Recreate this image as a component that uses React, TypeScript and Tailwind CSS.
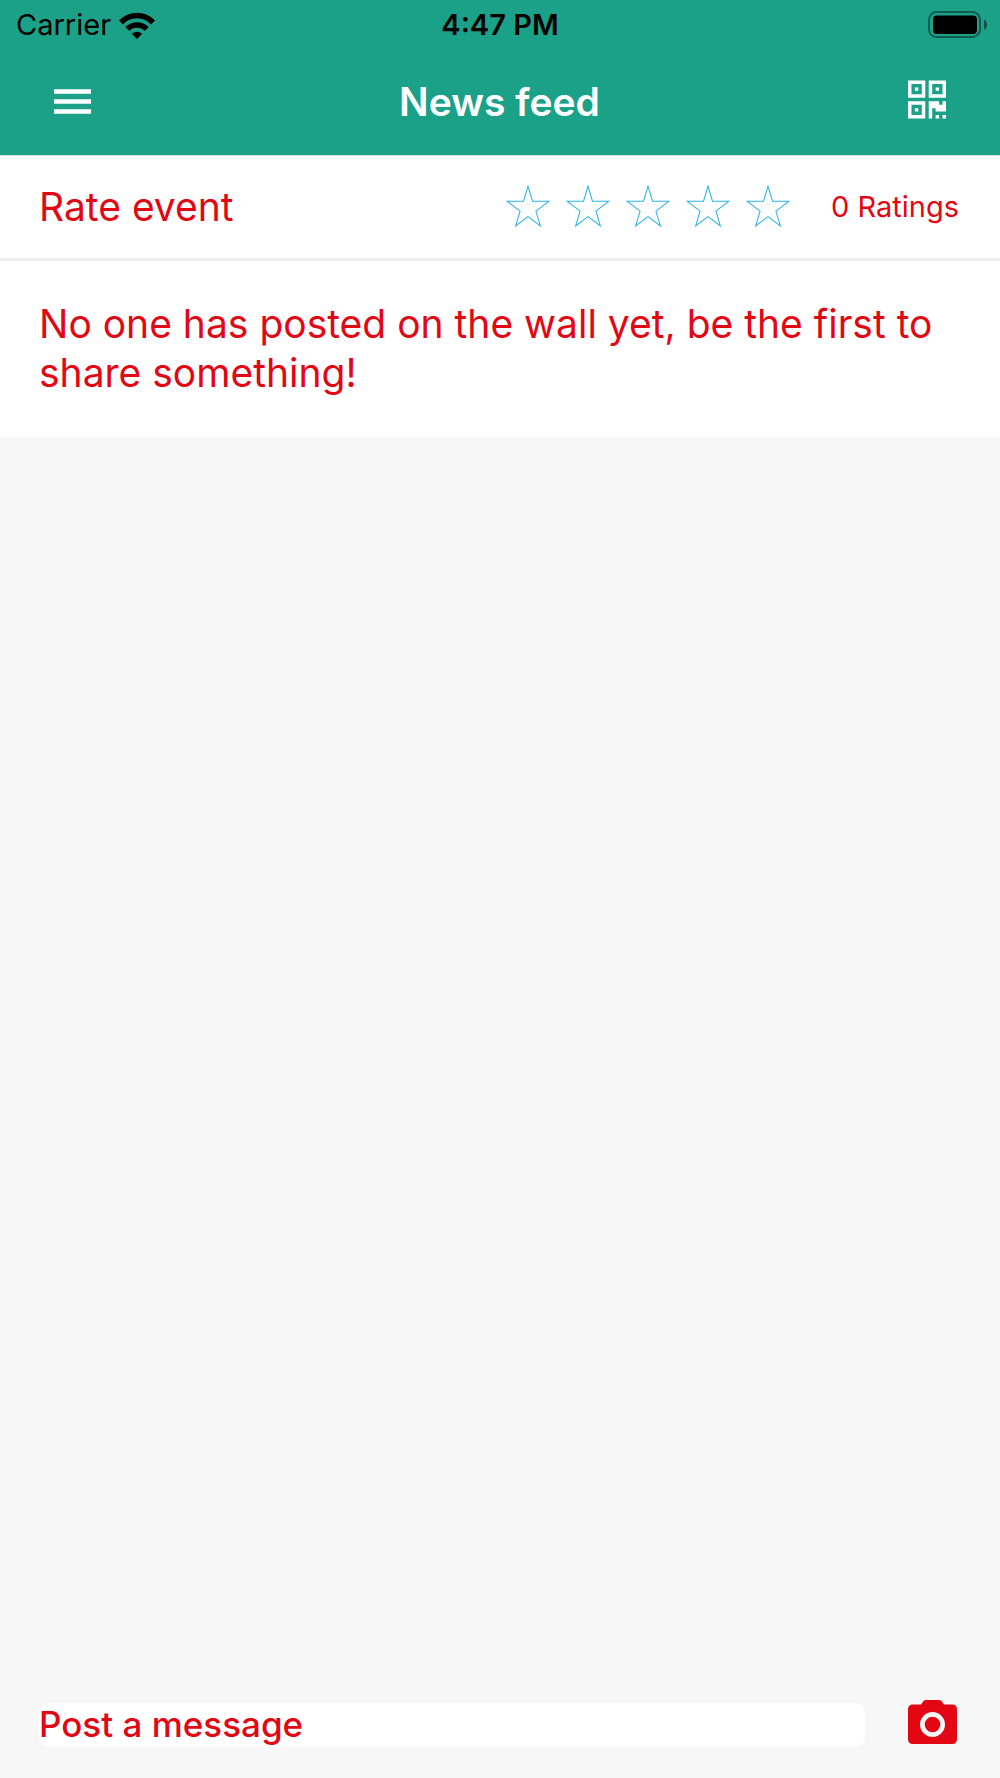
import { useState } from "react";

const QR_MODULES = [
  "M0 0h5v5H0zM1 1v3h3V1zM2 2h1v1H2z",
  "M6 0h5v5H6zM7 1v3h3V1zM8 2h1v1H8z",
  "M0 6h5v5H0zM1 7v3h3V7zM2 8h1v1H2z",
  "M6 6h3v1h1V6h1v3H8V8H7v3H6zM8 10h1v1H8zM10 10h1v1h-1z",
];

function WifiIcon() {
  return (
    <svg viewBox="0 0 36 27" className="h-[27px] w-9" fill="none" stroke="currentColor" aria-hidden="true">
      <path d="M2 10.500a22 22 0 0 1 32 0" strokeWidth="5.500" />
      <path d="M8.300 17a13.500 13.500 0 0 1 19.400 0" strokeWidth="5.500" />
      <path d="M12.800 21.800a8.500 8.500 0 0 1 10.400 0L18 27z" fill="currentColor" stroke="none" />
    </svg>
  );
}

function BatteryIcon() {
  return (
    <svg viewBox="0 0 60 28" className="h-7 w-[60px]" aria-hidden="true">
      <rect x="1" y="1" width="51" height="25" rx="7.5" fill="none" stroke="black" strokeOpacity="0.42" strokeWidth="2" />
      <rect x="5" y="4.5" width="44" height="18.5" rx="4" />
      <path d="M56 8.5c4 2 4 8.500 0 10.500z" fillOpacity="0.5" />
    </svg>
  );
}

function StatusBar() {
  return (
    <div className="grid h-[50px] grid-cols-3 items-center px-3 text-[29px] leading-8 text-black">
      <div className="flex items-center gap-2 pl-1">
        <span>Carrier</span>
        <WifiIcon />
      </div>
      <span className="text-center font-semibold">4:47 PM</span>
      <div className="flex justify-end">
        <BatteryIcon />
      </div>
    </div>
  );
}

function Header() {
  return (
    <header className="border-b border-[#d5dbd9] bg-[#1ca189]">
      <StatusBar />
      <div className="flex h-[105px] items-start justify-between px-[54px] pt-[27px]">
        <button type="button" aria-label="Menu" className="flex h-[49px] items-center">
          <svg viewBox="0 0 37 25" className="h-[25px] w-[37px]" fill="white">
            <path d="M0 .2h37v4.500H0zM0 10.200h37v4.500H0zM0 20.200h37v4.500H0z" />
          </svg>
        </button>
        <h1 className="text-[39px] font-semibold leading-[49px] text-white">News feed</h1>
        <button type="button" aria-label="Scan QR code" className="flex h-[45px] items-center">
          <svg viewBox="0 0 11 11" className="h-[39px] w-[38px]" fill="white" fillRule="evenodd">
            {QR_MODULES.map((d) => <path key={d} d={d} />)}
          </svg>
        </button>
      </div>
    </header>
  );
}

function Rating() {
  const [rating, setRating] = useState(0);
  return (
    <section className="flex h-[105px] items-center border-b-[3px] border-[#efefef] bg-white pl-[39px] pr-[41px]">
      <h2 className="grow pb-0.5 text-[39px] leading-[49px]">Rate event</h2>
      <div className="flex gap-4 pb-0.5">
        {[1, 2, 3, 4, 5].map((n) => (
          <button key={n} type="button" aria-label={`Rate ${n} of 5`} onClick={() => setRating(n)}>
            <svg viewBox="-1 -1 128 122" className="h-[42px] w-11" fill={n <= rating ? "#2db2e6" : "none"} stroke="#2db2e6" strokeWidth="3">
              <path d="M63 2 76 46h48L86 75l13 43-36-27-36 27 13-43L2 46h48z" />
            </svg>
          </button>
        ))}
      </div>
      <span className="ml-[41px] text-[29px] leading-8">0 Ratings</span>
    </section>
  );
}

function Composer() {
  return (
    <form className="flex items-end pb-[31px] pl-[39px] pr-[43px]" onSubmit={(e) => e.preventDefault()}>
      <input
        type="text"
        aria-label="Post a message"
        placeholder="Post a message"
        className="h-11 min-w-0 grow rounded-[10px] bg-white pb-0.5 text-[35px] font-medium outline-none placeholder:text-[#e30613] placeholder:opacity-100"
      />
      <button type="button" aria-label="Add photo" className="ml-[43px] pb-[3px]">
        <svg viewBox="0 0 49 44" className="h-11 w-[49px]" fill="currentColor">
          <path
            fillRule="evenodd"
            d="M18 0h13c1 0 2 .4 2.700 1.200L36 4.500h8.500A4.500 4.500 0 0 1 49 9v30.500a4.500 4.500 0 0 1-4.500 4.500h-40A4.500 4.500 0 0 1 0 39.500V9a4.500 4.500 0 0 1 4.500-4.500H13l2.300-3.300C16 .4 17 0 18 0zM24.500 12a12.500 12.500 0 1 0 0 25 12.500 12.500 0 0 0 0-25z"
          />
          <circle cx="24.500" cy="24.500" r="7.800" />
        </svg>
      </button>
    </form>
  );
}

export default function App() {
  return (
    <div className="flex min-h-screen flex-col bg-[#f7f7f7] font-['Inter',sans-serif] text-[#e30613]">
      <Header />
      <main className="flex grow flex-col">
        <Rating />
        <p className="bg-white px-[39px] pb-10 pt-[38px] text-[39px] leading-[49px]">
          No one has posted on the wall yet, be the first to share something!
        </p>
        <div className="grow" />
        <Composer />
      </main>
    </div>
  );
}
